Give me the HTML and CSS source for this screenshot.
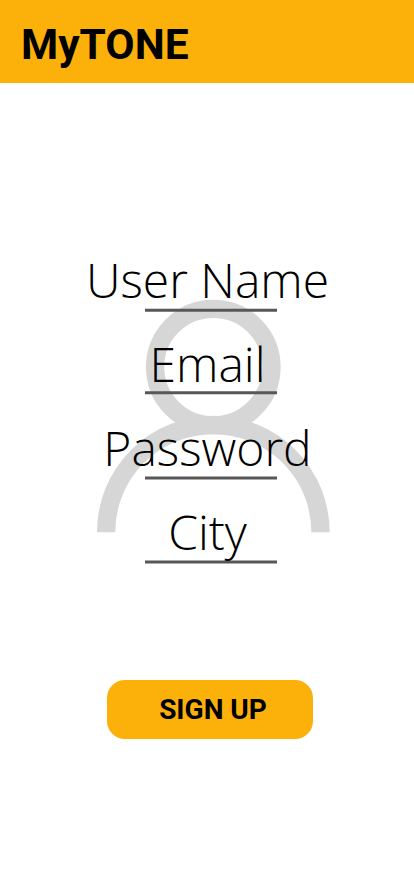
FILE: index.html
```html
<!DOCTYPE html>
<html lang="en">
<head>
<meta charset="utf-8">
<title>MyTONE</title>
<link rel="stylesheet" href="styles.css">
</head>
<body>
<header class="header"><h1 class="brand">MyTONE</h1></header>
<main class="main">
<form class="form">
<svg class="avatar" viewBox="0 0 236 236" aria-hidden="true"><g fill="none" stroke="#d6d6d6" stroke-width="18.3"><circle cx="117.3" cy="68" r="58.2"/><path d="M10.1 233.2a107.2 107.2 0 0 1 214.4 0"/></g></svg>
<label class="field"><span class="label">User Name</span><svg class="rule" viewBox="0 0 132 6"><path d="M0 2.3h132"/></svg></label>
<label class="field"><span class="label">Email</span><svg class="rule" viewBox="0 0 132 6"><path d="M0 .7h132"/></svg></label>
<label class="field"><span class="label">Password</span><svg class="rule" viewBox="0 0 132 6"><path d="M0 2.1h132"/></svg></label>
<label class="field"><span class="label">City</span><svg class="rule" viewBox="0 0 132 6"><path d="M0 2h132"/></svg></label>
</form>
<button class="signup" type="button">SIGN UP</button>
</main>
</body>
</html>
```
FILE: styles.css
```css
* { box-sizing: border-box; }
body { margin: 0; height: 896px; background: #fff; color: #000; overflow: hidden; }
.header { height: 83.3px; background: #fcb10a; display: flex; align-items: center; padding: 6px 21px 0; }
.brand { margin: 0; font: 700 42.5px/50px Roboto, sans-serif; }
.main { display: flex; flex-direction: column; align-items: center; }
.form { position: relative; margin-top: 161.7px; width: 414px; height: 352px; display: flex; flex-direction: column; align-items: center; }
.avatar { position: absolute; left: 96px; top: 54px; width: 236px; height: 236px; }
.field { position: relative; width: 240px; height: 84px; display: flex; justify-content: center; font: 300 48px/70px "Open Sans", sans-serif; white-space: nowrap; }
.label { position: relative; z-index: 1; padding-left: 1px; }
.rule { position: absolute; left: 58px; top: 63px; width: 132px; height: 6px; overflow: visible; stroke: #585657; stroke-width: 3; }
.signup { margin: 83px 0 0 6px; width: 206px; height: 59px; padding: 0 0 0 6px; border: 0; border-radius: 18px; background: #fcb10a; color: #000; font: 700 28px/59px Roboto, sans-serif; }
```
